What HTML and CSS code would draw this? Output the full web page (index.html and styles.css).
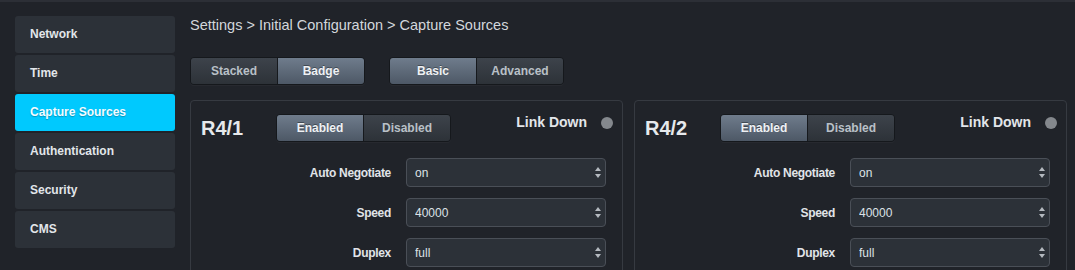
FILE: index.html
```html
<!DOCTYPE html>
<html lang="en">
<head>
    <meta charset="UTF-8">
    <meta name="viewport" content="width=device-width, initial-scale=1.0">
    <title>Settings - Capture Sources</title>
    <link rel="stylesheet" href="styles.css">
</head>
<body>
    <div class="page">
        <!-- settings menu -->
        <nav class="sidebar">
            <a class="nav-item" href="#">Network</a>
            <a class="nav-item" href="#">Time</a>
            <a class="nav-item active" href="#">Capture Sources</a>
            <a class="nav-item" href="#">Authentication</a>
            <a class="nav-item" href="#">Security</a>
            <a class="nav-item" href="#">CMS</a>
        </nav>

        <main class="content">
            <div class="breadcrumb">Settings &gt; Initial Configuration &gt; Capture Sources</div>

            <div class="toolbar">
                <div class="btn-group">
                    <button type="button" class="btn">Stacked</button>
                    <button type="button" class="btn active">Badge</button>
                </div>
                <div class="btn-group">
                    <button type="button" class="btn active">Basic</button>
                    <button type="button" class="btn">Advanced</button>
                </div>
            </div>

            <div class="cards">
                <section class="card">
                    <div class="card-header">
                        <h2 class="port-name">R4/1</h2>
                        <div class="btn-group">
                            <button type="button" class="btn active">Enabled</button>
                            <button type="button" class="btn">Disabled</button>
                        </div>
                        <div class="link-status">Link Down <span class="status-dot"></span></div>
                    </div>
                    <div class="form-row">
                        <label for="auto1">Auto Negotiate</label>
                        <div class="select-wrap">
                            <select id="auto1"><option>on</option><option>off</option></select>
                        </div>
                    </div>
                    <div class="form-row">
                        <label for="speed1">Speed</label>
                        <div class="select-wrap">
                            <select id="speed1"><option>40000</option><option>10000</option></select>
                        </div>
                    </div>
                    <div class="form-row">
                        <label for="duplex1">Duplex</label>
                        <div class="select-wrap">
                            <select id="duplex1"><option>full</option><option>half</option></select>
                        </div>
                    </div>
                </section>

                <section class="card">
                    <div class="card-header">
                        <h2 class="port-name">R4/2</h2>
                        <div class="btn-group">
                            <button type="button" class="btn active">Enabled</button>
                            <button type="button" class="btn">Disabled</button>
                        </div>
                        <div class="link-status">Link Down <span class="status-dot"></span></div>
                    </div>
                    <div class="form-row">
                        <label for="auto2">Auto Negotiate</label>
                        <div class="select-wrap">
                            <select id="auto2"><option>on</option><option>off</option></select>
                        </div>
                    </div>
                    <div class="form-row">
                        <label for="speed2">Speed</label>
                        <div class="select-wrap">
                            <select id="speed2"><option>40000</option><option>10000</option></select>
                        </div>
                    </div>
                    <div class="form-row">
                        <label for="duplex2">Duplex</label>
                        <div class="select-wrap">
                            <select id="duplex2"><option>full</option><option>half</option></select>
                        </div>
                    </div>
                </section>
            </div>
        </main>
    </div>
</body>
</html>
```

FILE: styles.css
```css
html, body {
    overflow: hidden;
}

body {
    margin: 0;
    background-color: #202329;
    border-top: 2px solid #2c2f36;
    font-family: "Liberation Sans", Arial, sans-serif;
    color: #dfe3e8;
}

.page {
    display: flex;
    padding: 14px 0 0 15px;
}

/* sidebar */
.sidebar {
    width: 160px;
    display: flex;
    flex-direction: column;
    gap: 2px;
    flex-shrink: 0;
}

.nav-item {
    display: block;
    height: 37px;
    line-height: 36px;
    padding-left: 15px;
    background-color: #2c3138;
    border-radius: 3px;
    color: #e2e6ea;
    font-size: 12px;
    font-weight: bold;
    text-decoration: none;
}

.nav-item.active {
    background-color: #00c9fe;
    color: #f4fbff;
    text-shadow: 0 1px 1px rgba(0, 0, 0, 0.25);
}

/* main area */
.content {
    margin-left: 15px;
}

.breadcrumb {
    font-size: 14.5px;
    line-height: 18px;
    color: #d3d7dc;
}

.toolbar {
    display: flex;
    gap: 24px;
    margin-top: 23px;
}

.btn-group {
    display: flex;
    border: 1px solid #15181c;
    border-radius: 4px;
    overflow: hidden;
    box-shadow: 0 1px 0 rgba(255, 255, 255, 0.03);
}

.btn {
    width: 86px;
    height: 26px;
    padding: 0;
    border: none;
    background: linear-gradient(#3d434b, #2d3238);
    color: #b9c0c7;
    font-family: "Liberation Sans", Arial, sans-serif;
    font-size: 12px;
    font-weight: bold;
    cursor: pointer;
}

.btn + .btn {
    border-left: 1px solid #16191d;
    width: 87px;
}

.btn.active {
    background: linear-gradient(#6f7c8c, #4d5866);
    color: #eef1f4;
    text-shadow: 0 -1px 0 rgba(0, 0, 0, 0.35);
}

/* port cards */
.cards {
    display: flex;
    gap: 11px;
    margin-top: 15px;
}

.card {
    width: 433px;
    box-sizing: border-box;
    border: 1px solid #363a41;
    border-radius: 4px;
    padding: 13px 9px 30px 10px;
}

.card-header {
    display: flex;
    align-items: center;
}

.port-name {
    width: 75px;
    margin: 0;
    font-size: 20px;
    font-weight: bold;
    color: #e6e9ec;
}

.link-status {
    align-self: flex-start;
    margin-left: auto;
    display: flex;
    align-items: center;
    gap: 14px;
    font-size: 14px;
    line-height: 16px;
    font-weight: bold;
    color: #e2e6ea;
}

.status-dot {
    width: 12px;
    height: 12px;
    border-radius: 50%;
    background-color: #84888d;
    margin-top: 1px;
}

.form-row {
    display: flex;
    align-items: center;
    gap: 15px;
    margin-top: 11px;
}

.card-header + .form-row {
    margin-top: 16px;
}

.form-row label {
    width: 190px;
    text-align: right;
    font-size: 12px;
    font-weight: bold;
    letter-spacing: -0.3px;
    color: #e0e4e8;
}

.select-wrap {
    position: relative;
    width: 200px;
}

.select-wrap select {
    -webkit-appearance: none;
    appearance: none;
    width: 100%;
    height: 29px;
    padding: 0 20px 0 8px;
    background-color: #2c3138;
    border: 1px solid #4a4f57;
    border-radius: 4px;
    color: #dde2e7;
    font-family: "Liberation Sans", Arial, sans-serif;
    font-size: 12px;
    outline: none;
}

/* up/down arrows over the select */
.select-wrap::before,
.select-wrap::after {
    content: "";
    position: absolute;
    right: 5px;
    border-left: 3px solid transparent;
    border-right: 3px solid transparent;
    pointer-events: none;
}

.select-wrap::before {
    top: 9px;
    border-bottom: 4px solid #b4b9bf;
}

.select-wrap::after {
    top: 16px;
    border-top: 4px solid #b4b9bf;
}
```
